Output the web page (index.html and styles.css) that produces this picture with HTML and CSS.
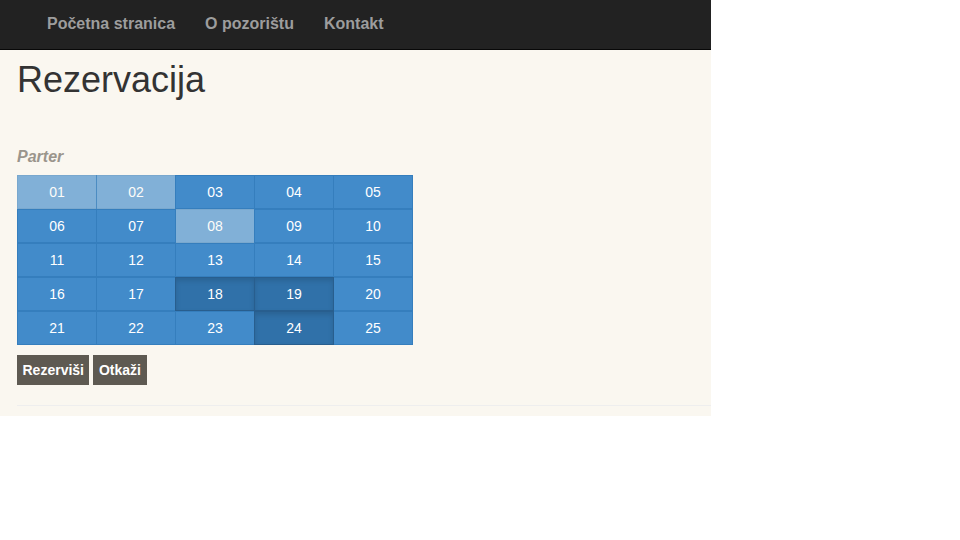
FILE: index.html
```html
<!DOCTYPE html>
<html lang="sr">
<head>
<meta charset="utf-8">
<title>Rezervacija</title>
<link rel="stylesheet" href="styles.css">
</head>
<body>
<div class="page">
  <nav class="navbar">
    <ul class="nav">
      <li><a href="#">Početna stranica</a></li>
      <li><a href="#">O pozorištu</a></li>
      <li><a href="#">Kontakt</a></li>
    </ul>
  </nav>
  <main class="content">
    <h1 class="title">Rezervacija</h1>
    <h4 class="section">Parter</h4>
    <div class="seats">
      <div class="seat-row">
        <button class="seat taken">01</button><button class="seat taken">02</button><button class="seat">03</button><button class="seat">04</button><button class="seat">05</button>
      </div>
      <div class="seat-row">
        <button class="seat">06</button><button class="seat">07</button><button class="seat taken">08</button><button class="seat">09</button><button class="seat">10</button>
      </div>
      <div class="seat-row">
        <button class="seat">11</button><button class="seat">12</button><button class="seat">13</button><button class="seat">14</button><button class="seat">15</button>
      </div>
      <div class="seat-row">
        <button class="seat">16</button><button class="seat">17</button><button class="seat selected">18</button><button class="seat selected">19</button><button class="seat">20</button>
      </div>
      <div class="seat-row">
        <button class="seat">21</button><button class="seat">22</button><button class="seat">23</button><button class="seat selected">24</button><button class="seat">25</button>
      </div>
    </div>
    <div class="actions">
      <button class="action">Rezerviši</button>
      <button class="action">Otkaži</button>
    </div>
    <hr class="divider">
  </main>
</div>
</body>
</html>
```

FILE: styles.css
```css
* { box-sizing: border-box; }

html, body {
  margin: 0;
  padding: 0;
  background: #ffffff;
  font-family: "Liberation Sans", Arial, sans-serif;
}

.page {
  width: 711px;
}

.navbar {
  height: 50px;
  background: #222222;
  border-bottom: 1px solid #080808;
}

.nav {
  list-style: none;
  margin: 0;
  padding: 0 0 0 32px;
  display: flex;
}

.nav a {
  display: block;
  padding: 14px 15px 15px;
  line-height: 20px;
  font-size: 16px;
  font-weight: bold;
  color: #9d9d9d;
  text-decoration: none;
}

.content {
  background: #faf7f0;
  padding: 10px 0 10px 17px;
}

.title {
  margin: 0;
  font-size: 36px;
  font-weight: normal;
  line-height: 40px;
  color: #333333;
}

.section {
  margin: 47px 0 8px;
  font-size: 16px;
  line-height: 20px;
  font-style: italic;
  font-weight: bold;
  color: #9a958c;
}

.seats {
  display: flex;
  flex-direction: column;
  width: 396px;
}

.seat-row {
  display: flex;
}

.seat {
  position: relative;
  width: 80px;
  height: 34px;
  margin: 0;
  padding: 0;
  font-family: "Liberation Sans", Arial, sans-serif;
  font-size: 14px;
  color: #ffffff;
  background: #428bca;
  border: 1px solid #357ebd;
  cursor: pointer;
}

.seat + .seat {
  margin-left: -1px;
}

.seat.taken {
  opacity: 0.65;
}

.seat.selected {
  z-index: 2;
  background: #3071a9;
  border-color: #285e8e;
  box-shadow: inset 0 3px 5px rgba(0, 0, 0, 0.125);
}

.actions {
  display: flex;
  gap: 4px;
  margin-top: 10px;
}

.action {
  height: 30px;
  margin: 0;
  padding: 0 5.5px;
  font-family: "Liberation Sans", Arial, sans-serif;
  font-size: 14px;
  font-weight: bold;
  color: #ffffff;
  background: #5e5a52;
  border: none;
  border-radius: 0;
}

.divider {
  margin: 20px 0 0;
  border: 0;
  border-top: 1px solid #eeeeee;
}
```
